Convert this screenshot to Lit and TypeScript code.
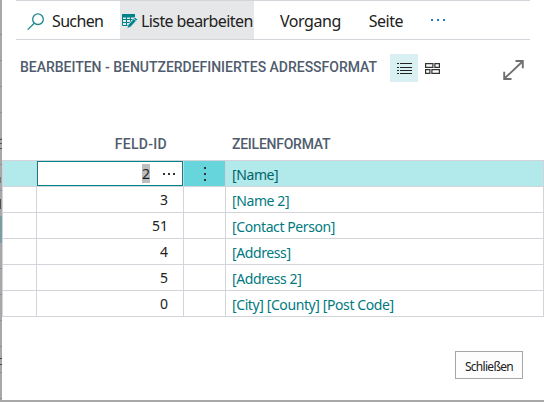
import { LitElement, html, css, svg } from "lit";
import { customElement, property } from "lit/decorators.js";

interface Row { id: string; format: string; }

const ROWS: Row[] = [
  { id: "2", format: "[Name]" },
  { id: "3", format: "[Name 2]" },
  { id: "51", format: "[Contact Person]" },
  { id: "4", format: "[Address]" },
  { id: "5", format: "[Address 2]" },
  { id: "0", format: "[City] [County] [Post Code]" },
];

const ICONS = {
  search: { w: 18, h: 18, body: svg`<g fill="none" stroke="#1a8589" stroke-width="1.3"><circle cx="11" cy="6.2" r="5.3"/><path d="M7.2 10.2L.8 16.6"/></g>` },
  edit: { w: 16, h: 15, body: svg`<path d="M0 0h13v3.5H0z" fill="#00838a"/><path d="M.5 2v9.5H7M4.5 2v10M8.5 2v6M0 5.5h11M0 8.5h8" fill="none" stroke="#00838a"/><path d="M13 3.2l2.6 2.3-7 7.6-3.6 1.4 1.1-3.7z" fill="#00838a" stroke="#e6e7e8" stroke-width=".8"/><path d="M11.6 4.6l2.6 2.2" stroke="#e6e7e8" stroke-width=".7"/>` },
  list: { w: 15, h: 11, body: svg`<path d="M0 .5h2M3 .5h12M0 4.5h2M3 4.5h12M0 7.5h2M3 7.5h12M0 10.5h2M3 10.5h12" stroke="#222" stroke-width="1"/>` },
  tiles: { w: 15, h: 11, body: svg`<path d="M.6.6h7.3v3.8H.6zM9.9.6h4.5v3.8H9.9zM.6 6.6h4.3v3.8H.6zM6.9 6.6h7.5v3.8H6.9z" fill="none" stroke="#333" stroke-width="1.2"/>` },
  expand: { w: 21, h: 20, body: svg`<path d="M1.5 18.5L19.5 1.5M12.5 1h7.3v7.3M1.2 11.7V19h7.3" fill="none" stroke="#707070" stroke-width="1.9"/>` },
};

@customElement("ui-icon")
export class UiIcon extends LitElement {
  @property() name: keyof typeof ICONS = "search";
  static styles = css`:host { display: block; flex: none; } svg { display: block; }`;
  render() {
    const i = ICONS[this.name];
    return html`<svg width=${i.w} height=${i.h} viewBox="0 0 ${i.w} ${i.h}">${i.body}</svg>`;
  }
}

@customElement("app-root")
export class AppRoot extends LitElement {
  static styles = css`
    :host { display: block; box-sizing: border-box; width: 544px; height: 402px; padding: 0 0 2px 2px; overflow: hidden;
      background:
        linear-gradient(#505766, #505766) 0 139px / 2px 1px no-repeat,
        linear-gradient(#505766, #505766) 0 143px / 2px 1px no-repeat,
        linear-gradient(#505766, #505766) 0 148px / 2px 1px no-repeat,
        linear-gradient(#787878, #787878) 0 177px / 1px 6px no-repeat,
        linear-gradient(#505050, #505050) 0 199px / 1px 10px no-repeat,
        linear-gradient(#78a0a2, #78a0a2) 0 216px / 2px 27px no-repeat,
        linear-gradient(#444, #444) 0 358px / 2px 1px no-repeat,
        linear-gradient(#444, #444) 0 364px / 2px 1px no-repeat,
        repeating-linear-gradient(#a8a8a8 0 25px, #8f8f8f 25px 26px) 0 9px;
      font: 15px "Noto Sans", "Open Sans", sans-serif; color: #212121; }
    * { box-sizing: border-box; }
    .dialog { height: 400px; background: #fff; display: flex; flex-direction: column; }
    .toolbar { height: 40px; margin: 0 14px; border: solid #d2d4d9; border-width: 1px 0; display: flex; flex: none; font-size: 16px; line-height: 41px; white-space: nowrap; }
    .search { width: 104px; padding-left: 11px; display: flex; gap: 7px; letter-spacing: -.65px; }
    .search ui-icon { margin-top: 12px; }
    .active { width: 134px; background: #e6e7e8; padding-left: 2px; display: flex; gap: 3px; letter-spacing: -.6px; }
    .active ui-icon { margin-top: 13px; }
    .action { margin-left: 26px; letter-spacing: -.45px; }
    .page { margin-left: 28px; letter-spacing: -.5px; }
    .more { display: flex; gap: 4px; margin: 18px 0 0 28px; }
    .more i { width: 2px; height: 2px; background: #1f7fc8; }
    .heading { display: flex; height: 28px; margin: 14px 20px 0 18px; line-height: 27px; flex: none; }
    .title, .head { font-family: Roboto, sans-serif; font-weight: 500; font-size: 14px; color: #505c6d; white-space: nowrap; }
    .title { width: 370px; letter-spacing: -.02px; }
    .view { width: 28px; height: 28px; display: grid; place-items: center; }
    .view.on { background: #d9f0f2; }
    .expand { margin: 6px 0 0 auto; }
    .head, .row { display: grid; grid-template-columns: 34px 147px 42px 1fr; flex: none; }
    .head { height: 78px; padding-top: 52px; line-height: 20px; }
    .head .id { text-align: right; padding-right: 16px; letter-spacing: .3px; }
    .head .caption { padding-left: 7px; letter-spacing: -.25px; }
    .table { border: solid #d2d4d9; border-width: 1px 1px 0 1px; flex: none; }
    .row { grid-template-rows: 26px; height: 26px; line-height: 26px; font-size: 14px; margin-left: -1px; }
    .row > * { border: solid #d2d4d9; border-width: 0 0 1px 1px; }
    .num { text-align: right; padding-right: 15px; }
    .format { color: #007a80; padding: 1px 0 0 6px; letter-spacing: -.4px; white-space: nowrap; }
    .selected { background: #b2e9eb; }
    .selected .format { color: #006469; }
    .edit { display: flex; justify-content: flex-end; background: #fff; box-shadow: inset 0 0 0 1px #00838a; padding-right: 8px; line-height: 25px; }
    .value { background: #bdbdbd; height: 19px; line-height: 20px; margin-top: 3px; }
    .dots { display: flex; gap: 3px; margin: 12px 0 0 13px; }
    .dots i, .menu i { width: 2px; height: 2px; background: #333; }
    .menu { background: #66d5dc; display: flex; flex-direction: column; align-items: center; justify-content: center; gap: 4px; }
    .close { font: 12px "Noto Sans", sans-serif; letter-spacing: -.7px; color: #212121; width: 68px; height: 28px; padding: 3px 0 0; margin: 34px 21px 0 auto; border: 1px solid #a6a6a6; background: #fdfdfd; }
  `;

  private dots = html`<i></i><i></i><i></i>`;

  private row(r: Row, selected: boolean) {
    return html`<div class="row ${selected ? "selected" : ""}">
      <div></div>
      ${selected
        ? html`<div class="edit"><span class="value">${r.id}</span><span class="dots">${this.dots}</span></div><div class="menu">${this.dots}</div>`
        : html`<div class="num">${r.id}</div><div></div>`}
      <div class="format">${r.format}</div>
    </div>`;
  }

  render() {
    return html`<div class="dialog">
      <div class="toolbar">
        <div class="search"><ui-icon name="search"></ui-icon><span>Suchen</span></div>
        <div class="active"><ui-icon name="edit"></ui-icon><span>Liste bearbeiten</span></div>
        <span class="action">Vorgang</span><span class="page">Seite</span>
        <div class="more">${this.dots}</div>
      </div>
      <div class="heading">
        <span class="title">BEARBEITEN - BENUTZERDEFINIERTES ADRESSFORMAT</span>
        <div class="view on"><ui-icon name="list"></ui-icon></div>
        <div class="view"><ui-icon name="tiles"></ui-icon></div>
        <ui-icon class="expand" name="expand"></ui-icon>
      </div>
      <div class="head"><span></span><span class="id">FELD-ID</span><span></span><span class="caption">ZEILENFORMAT</span></div>
      <div class="table">${ROWS.map((r, i) => this.row(r, i === 0))}</div>
      <button class="close">Schließen</button>
    </div>`;
  }
}
